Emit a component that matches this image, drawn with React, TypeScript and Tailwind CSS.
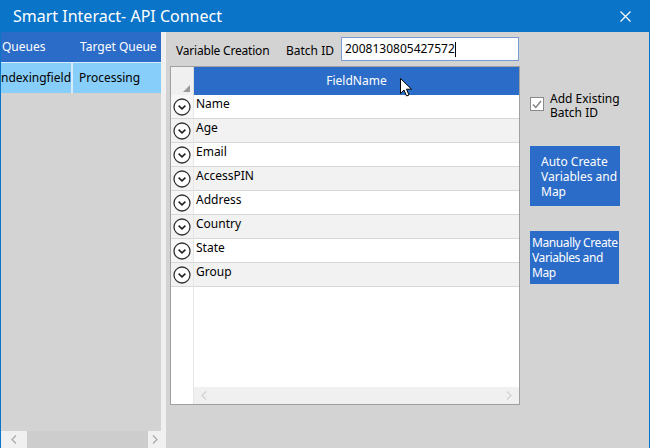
import React from 'react';

const fields = ['Name', 'Age', 'Email', 'AccessPIN', 'Address', 'Country', 'State', 'Group'];

const font = { fontFamily: '"Noto Sans", "Open Sans", sans-serif' };

const ExpandIcon: React.FC = () => (
  <svg width="18" height="18" viewBox="0 0 18 18">
    <circle cx="9" cy="9" r="8" fill="white" stroke="#333" strokeWidth="1.3" />
    <path d="M5.6 7.6 L9 10.8 L12.4 7.6" fill="none" stroke="#222" strokeWidth="1.6" />
  </svg>
);

const Chevron: React.FC<{ dir: 'left' | 'right'; color?: string }> = ({ dir, color = '#c4c4c4' }) => (
  <svg width="6" height="9" viewBox="0 0 6 9">
    <path d={dir === 'left' ? 'M5 0.5 L1 4.5 L5 8.5' : 'M1 0.5 L5 4.5 L1 8.5'} fill="none" stroke={color} strokeWidth="1.2" />
  </svg>
);

const App: React.FC = () => {
  return (
    <div
      className="w-[650px] h-[448px] flex flex-col bg-[#d3d3d3] border-x border-[#0a74c9] text-[12px] text-black overflow-hidden"
      style={font}
    >
      {/* title bar */}
      <div className="h-[32px] shrink-0 bg-[#0a74c9] flex items-center justify-between pl-[12px] pr-[18px] text-white">
        <span className="text-[16px]">Smart Interact- API Connect</span>
        <svg width="11" height="11" viewBox="0 0 11 11">
          <path d="M0.5 0.5 L10.5 10.5 M10.5 0.5 L0.5 10.5" stroke="white" strokeWidth="1.2" />
        </svg>
      </div>

      <div className="flex flex-1 min-h-0">
        {/* left queue panel */}
        <div className="w-[160px] shrink-0 flex flex-col">
          <div className="h-[30px] bg-[#2b6cc8] text-white flex items-center">
            <span className="w-[72px] pl-[1px]">Queues</span>
            <span className="pl-[7px]">Target Queue</span>
          </div>
          <div className="h-[31px] flex bg-[#d7ecfb] pt-[1px] gap-[2px]">
            <div className="w-[70px] bg-[#87cefa] flex items-center overflow-hidden whitespace-nowrap">ndexingfield</div>
            <div className="flex-1 bg-[#87cefa] flex items-center pl-[6px]">Processing</div>
          </div>
          <div className="flex-1" />
          <div className="h-[17px] flex">
            <div className="w-[26px] bg-[#f0f0f0] flex items-center justify-center">
              <Chevron dir="left" color="#a8a8a8" />
            </div>
            <div className="flex-1 bg-[#cdcdcd]" />
            <div className="w-[13px] bg-[#f0f0f0] flex items-center justify-center">
              <Chevron dir="right" color="#a8a8a8" />
            </div>
          </div>
        </div>

        {/* splitter */}
        <div className="w-[5px] shrink-0 bg-[#f0f0f0]" />

        {/* right content */}
        <div className="flex flex-1 pl-[4px]">
          <div className="w-[350px] flex flex-col">
            <div className="h-[34px] flex items-center pt-[3px]">
              <span className="pl-[6px] w-[116px] tracking-[-0.2px]">Variable Creation</span>
              <span className="w-[55px]">Batch ID</span>
              <div className="w-[178px] h-[24px] bg-white border border-[#7a9cd3] flex items-center pl-[3px] -mt-[3px]">
                <span>2008130805427572</span>
                <span className="w-px h-[15px] bg-black" />
              </div>
            </div>

            {/* grid */}
            <div className="relative h-[339px] bg-white border border-[#a0a0a0] flex flex-col">
              <div className="h-[28px] flex shrink-0">
                <div className="w-[23px] bg-[#f0f0f0] border-r border-[#dcdcdc] flex items-end justify-end p-[3px]">
                  <svg width="7" height="7" viewBox="0 0 7 7">
                    <path d="M7 0 L7 7 L0 7 Z" fill="#9a9a9a" />
                  </svg>
                </div>
                <div className="flex-1 bg-[#2b6cc8] text-white flex items-center justify-center">FieldName</div>
              </div>
              <div className="flex-1 flex min-h-0">
                <div className="w-[23px] flex flex-col border-r border-[#e6e6e6]">
                  {fields.map((f, i) => (
                    <div key={f} className={`h-[24px] border-b border-[#d8d8d8] flex items-start justify-center pt-[3px] ${i % 2 ? 'bg-[#f2f2f2]' : 'bg-[#f7f7f7]'}`}>
                      <ExpandIcon />
                    </div>
                  ))}
                </div>
                <div className="flex-1 flex flex-col">
                  {fields.map((f, i) => (
                    <div key={f} className={`h-[24px] border-b border-[#d8d8d8] pl-[2px] leading-[16px] pt-[1px] ${i % 2 ? 'bg-[#f2f2f2]' : 'bg-white'}`}>
                      {f}
                    </div>
                  ))}
                  <div className="flex-1" />
                  <div className="h-[17px] bg-[#f0f0f0] flex items-center justify-between px-[7px]">
                    <Chevron dir="left" color="#d0d0d0" />
                    <Chevron dir="right" color="#d0d0d0" />
                  </div>
                </div>
              </div>
              {/* mouse pointer */}
              <svg className="absolute left-[229px] top-[11px]" width="13" height="20" viewBox="0 0 13 20">
                <path d="M0.5 0.5 L0.5 15.5 L4 12 L6.5 18 L9 17 L6.5 11.2 L11.5 11.2 Z" fill="white" stroke="black" strokeWidth="1" />
              </svg>
            </div>
          </div>

          {/* side actions */}
          <div className="pl-[10px] flex flex-col">
            <label className="flex items-start gap-[6px] mt-[60px] leading-[14px]">
              <span className="w-[14px] h-[14px] mt-[5px] shrink-0 border border-[#8a8a8a] bg-white flex items-center justify-center">
                <svg width="10" height="9" viewBox="0 0 10 9">
                  <path d="M1 4.5 L3.8 7.5 L9 1" fill="none" stroke="#808080" strokeWidth="1.4" />
                </svg>
              </span>
              <span>Add Existing<br />Batch ID</span>
            </label>
            <div className="mt-[26px] w-[90px] h-[60px] bg-[#2b6cc8] text-white leading-[15px] pl-[11px] flex items-center">
              <span>Auto Create<br />Variables and<br />Map</span>
            </div>
            <div className="mt-[25px] w-[89px] h-[53px] bg-[#2b6cc8] text-white leading-[15px] pl-[2px] flex items-center whitespace-nowrap overflow-hidden tracking-[-0.4px]">
              <span>Manually Create<br />Variables and<br />Map</span>
            </div>
          </div>
        </div>
      </div>
    </div>
  );
};

export default App;
